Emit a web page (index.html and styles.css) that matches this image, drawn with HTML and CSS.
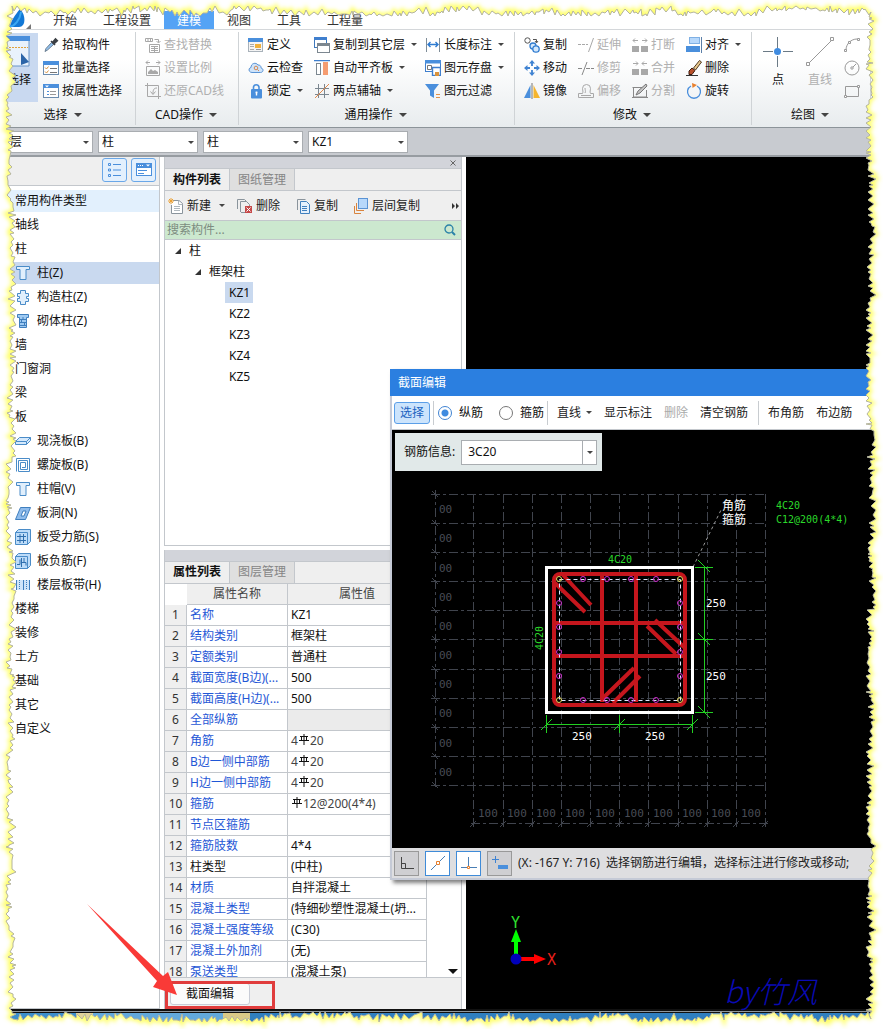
FILE: index.html
```html
<!DOCTYPE html>
<html lang="zh-CN">
<head>
<meta charset="utf-8">
<title>截面编辑</title>
<link rel="stylesheet" href="styles.css">
</head>
<body>
<svg class="defs" aria-hidden="true">
  <symbol id="i-picker" viewBox="0 0 16 16"><path d="M2 14.500l1-3 5.500-6 2 2-6 5.500z" fill="#8fc0ee" stroke="#6b7f92"/><path d="M8 4l4 4M9.500 5.500l3-3.500 1.800 1.800-3.300 3z" stroke="#3b3f44" stroke-width="1.600" fill="#3b3f44"/></symbol>
  <symbol id="i-list" viewBox="0 0 16 16"><rect x=".5" y="1.500" width="15" height="13" fill="#fff" stroke="#6b8cae"/><path d="M0 1h16v4H0z" fill="#4a8fdc"/><path d="M2 7.500l1.500 1.500 2-2.500M2 11.500l1.500 1.500 2-2.500" stroke="#d9923c" fill="none"/><path d="M7 8.500h7M7 12.500h7" stroke="#777"/></symbol>
  <symbol id="i-attr" viewBox="0 0 16 16"><rect x=".5" y="1.500" width="15" height="13" fill="#fff" stroke="#6b8cae"/><path d="M0 1h16v4H0z" fill="#4a8fdc"/><path d="M2 2.500h4L4 4.500z" fill="#fff"/><path d="M4 8.500h2M4 11.500h2" stroke="#4a8fdc"/><path d="M7 8.500h6M7 11.500h6" stroke="#999"/></symbol>
  <symbol id="i-find" viewBox="0 0 16 16"><g fill="none" stroke="#a8a8a8"><path d="M.500 1.500h7v3h-7zM3 1.500v3M5.500 1.500v3M9.500 2.500h4v3"/><path d="M11.500 4l2 2 2-2"/><path d="M4.500 7.500h10v8h-10z"/><path d="M6 9.500h7M6 11.500h7M6 13.500h7M9.500 9v6" /></g></symbol>
  <symbol id="i-scale" viewBox="0 0 16 16"><g fill="none" stroke="#a8a8a8"><path d="M1 2.500h4M11 2.500h4M3 .5l-2 2 2 2M13 .5l2 2-2 2"/><path d="M1.500 6.500h13v9h-13z"/></g><path d="M3 14v-2l3-3 2 2 2-1 3 2v2z" fill="#a8a8a8"/></symbol>
  <symbol id="i-restore" viewBox="0 0 16 16"><g fill="none" stroke="#a8a8a8"><path d="M2.500 0v13.500H16M0 2.500h13.500V16M12 5c-4 0-4 3-4 6M5.500 8.500L8 11.500l2.500-3"/></g></symbol>
  <symbol id="i-define" viewBox="0 0 16 16"><rect x=".5" y="1.500" width="14" height="13" fill="#f4f4f4" stroke="#a9b2ba"/><path d="M0 1h15v4H0z" fill="#4a8fdc"/><path d="M2 7.500h4M2 9.500h4M2 12.500h4" stroke="#aaa"/><path d="M7 7h6v4H7z" fill="#f0b13d"/><path d="M8 12.500h5" stroke="#999"/></symbol>
  <symbol id="i-cloud" viewBox="0 0 16 16"><path d="M4 12.500C.500 12.500 0 8 3 7.500 3 3 8 2 10 5c3 0 3 2 3 3 3 .5 2.500 4.500-.5 4.500z" fill="#cfe4fa" stroke="#5a93d4"/><circle cx="8" cy="8" r="1.800" fill="none" stroke="#d58a55"/><path d="M9.500 9.500L11 11" stroke="#d58a55"/></symbol>
  <symbol id="i-lock" viewBox="0 0 16 16"><path d="M5.500 7V4a2.800 2.800 0 0 1 5.500 0v3" fill="none" stroke="#4a8fdc" stroke-width="1.600"/><rect x="3" y="6" width="11" height="9.500" rx="1" fill="#4a8fdc"/><path d="M8.500 8.500v4M7.500 9.500h2" stroke="#fff" stroke-width="1.400"/></symbol>
  <symbol id="i-copyfloor" viewBox="0 0 16 16"><rect x=".5" y=".5" width="12" height="10" fill="#fff" stroke="#3f79bd"/><path d="M0 0h13v3H0z" fill="#3f7fce"/><rect x="3.500" y="6.500" width="12" height="9" fill="#fff" stroke="#7c8790"/><path d="M3 6h13v3H3z" fill="#7c8790"/></symbol>
  <symbol id="i-level" viewBox="0 0 16 16"><path d="M0 .5h16" stroke="#3f7fce" stroke-width="1.500"/><rect x="2.500" y="3.500" width="4" height="11" fill="#fff" stroke="#7c8790"/><rect x="9" y="2" width="5" height="13" fill="#f59c70"/></symbol>
  <symbol id="i-axis2" viewBox="0 0 16 16"><path d="M4.500 1v14M10.500 1v14M1 5.500h14M1 11.500h14" stroke="#7c8790"/><path d="M1 15L15 1" stroke="#e3894a"/></symbol>
  <symbol id="i-length" viewBox="0 0 16 16"><path d="M1.500 1v14M14.500 1v14" stroke="#7f8d99"/><path d="M3 7.500h10M5.500 5L3 7.500 5.500 10M10.500 5L13 7.500 10.500 10" stroke="#2f7bd0" fill="none" stroke-width="1.400"/></symbol>
  <symbol id="i-save" viewBox="0 0 16 16"><rect x=".5" y=".5" width="15" height="11" fill="#fff" stroke="#3f7fce"/><path d="M0 0h16v3.500H0z" fill="#4a8fdc"/><path d="M2.500 5.500h4v4h-4z" fill="none" stroke="#777"/><path d="M7.500 7.500h8v8h-8z" fill="#fff" stroke="#3f7fce" stroke-width="1.400"/><path d="M10 12h4v4h-4z" fill="#d9923c"/></symbol>
  <symbol id="i-filter" viewBox="0 0 16 16"><path d="M0 1h14L9 7.500V15l-4-2.500V7.500z" fill="#4a8fdc"/><path d="M11 11.500h4M11 14.500h4" stroke="#e0914a"/></symbol>
  <symbol id="i-copy3" viewBox="0 0 16 16"><g fill="#fff" stroke="#555"><circle cx="3.500" cy="3.500" r="2.700"/><path d="M9 2.500h3.500v3M11 4l1.500 2L14 4" fill="none"/></g><g fill="#d4e8fb" stroke="#2f7bd0" stroke-width="1.300"><circle cx="9" cy="9" r="3"/><circle cx="12" cy="12" r="3.200"/></g></symbol>
  <symbol id="i-move" viewBox="0 0 16 16"><path d="M8 0l3 3.500H5zM8 16l3-3.500H5zM0 8l3.500-3v6zM16 8l-3.500-3v6z" fill="#3f83d2"/><path d="M8 3v3M8 10v3M3 8h3M10 8h3" stroke="#3f83d2" stroke-width="1.800"/></symbol>
  <symbol id="i-mirror" viewBox="0 0 16 16"><path d="M6.500 2v13H0z" fill="#4a8fdc"/><path d="M8 0v16" stroke="#777"/><path d="M9.500 2v13H16z" fill="#f5b52e"/></symbol>
  <symbol id="i-extend" viewBox="0 0 16 16"><path d="M0 7.500h10" stroke="#a8a8a8" stroke-dasharray="3 1"/><path d="M15.500 1l-5 14" stroke="#a8a8a8"/></symbol>
  <symbol id="i-trim" viewBox="0 0 16 16"><path d="M0 8.500h5M8 8.500h8" stroke="#888" stroke-dasharray="4 1"/><path d="M9 2L4 15" stroke="#888"/></symbol>
  <symbol id="i-offset" viewBox="0 0 16 16"><path d="M.500 14.500v-4h4c1-2 0-3 0-5a4 4 0 0 1 8 0c0 2-1 3 0 5h3v4z" fill="none" stroke="#a8a8a8"/><path d="M3 12.500h10M7 10c1-2 0-3 0-5" stroke="#a8a8a8" fill="none"/></symbol>
  <symbol id="i-break" viewBox="0 0 16 16"><path d="M0 9h7v6H0zM9 9h7v6H9z" fill="#a8a8a8"/><path d="M1 3.500h5M10 3.500h5M3 1.500l-2 2 2 2M13 1.500l2 2-2 2" fill="none" stroke="#a8a8a8"/></symbol>
  <symbol id="i-merge" viewBox="0 0 16 16"><path d="M0 9h7v6H0zM9 9h7v6H9z" fill="#a8a8a8"/><path d="M1 3.500h5M10 3.500h5M4 1.500l2 2-2 2M12 1.500l-2 2 2 2" fill="none" stroke="#a8a8a8"/></symbol>
  <symbol id="i-split" viewBox="0 0 16 16"><path d="M.500 4.500h10M1.500 4v10h13V7M0 14.500h16" fill="none" stroke="#888"/><path d="M4 12l2-4 8-7 1 2-7 7z" fill="#c4c4c4" stroke="#777"/></symbol>
  <symbol id="i-align" viewBox="0 0 16 16"><path d="M15.500 0v16" stroke="#5b7fa8"/><rect x="3.500" y=".5" width="10" height="6" fill="#b7d8fb" stroke="#7fb0e4"/><rect x="0" y="9" width="14" height="6" fill="#4a8fdc"/></symbol>
  <symbol id="i-brush" viewBox="0 0 16 16"><path d="M7.500 8l6-7.500 2 1.500-6 8z" fill="#e9c98e" stroke="#50381f"/><path d="M3 11l3-3 3 2.500-3 4H3z" fill="#b8502a" stroke="#3d1d10"/><path d="M0 15.500h12" stroke="#333"/></symbol>
  <symbol id="i-rotate" viewBox="0 0 16 16"><path d="M5 3a6.500 6.500 0 1 0 6 0" fill="none" stroke="#4a8fdc" stroke-width="1.300"/><path d="M6 0l5 2-4.500 3z" fill="#e8812e"/></symbol>
  <symbol id="i-new" viewBox="0 0 16 16"><path d="M5 2.500h6l3.500 3v10h-11V7" fill="#fff" stroke="#8a949c"/><path d="M10.500 2.500v4h4M6 8.500h6M6 10.500h6M6 12.500h6" stroke="#b0b8be" fill="none"/><path d="M3 0v6M0 3h6M1 1l4 4M5 1L1 5" stroke="#eda235"/></symbol>
  <symbol id="i-del" viewBox="0 0 16 16"><path d="M.500 11V1.500h7l2 2M3.500 14V3.500h6l3 3v2M4 14.500h4" fill="none" stroke="#8a949c"/><rect x="8" y="8" width="7" height="7" fill="#c64a4a"/><path d="M9.500 9.500l4 4M13.500 9.500l-4 4" stroke="#fff"/></symbol>
  <symbol id="i-copy" viewBox="0 0 16 16"><path d="M2.500 12V1.500h8" fill="none" stroke="#8a949c"/><path d="M5.500 3.500h6l3 3v9h-9z" fill="#e4f0fc" stroke="#3f7fbe"/><path d="M7 8.500h5M7 10.500h5M7 12.500h5" stroke="#3f7fbe"/></symbol>
  <symbol id="i-layer" viewBox="0 0 16 16"><path d="M1.500 8v7.500H8M3.500 5v7.500H11" fill="none" stroke="#d9843e"/><rect x="5.500" y=".5" width="9" height="10" fill="#b7d8fb" stroke="#5a93d4"/></symbol>
  <symbol id="i-col" viewBox="0 0 16 16"><path d="M1.500 1.500h13v3h-3.500v10H5v-10H1.500z" fill="#e1effc" stroke="#4a8cc8"/></symbol>
  <symbol id="i-gcol" viewBox="0 0 16 16"><path d="M5.500 1.500h5v3h3v3h-2v2h2v3h-3v3h-5v-3h-3v-3h2v-2h-2v-3h3z" fill="#e1effc" stroke="#4a8cc8"/></symbol>
  <symbol id="i-bcol" viewBox="0 0 16 16"><path d="M2.500 1.500h11v3h-2v10h-7v-10h-2z" fill="#9fcaf2" stroke="#3f7fbe"/><path d="M5 6.500h6M5 9.500h6M5 12.500h6M8 4v3M6.500 7v3M9.500 10v3" stroke="#3f7fbe"/></symbol>
  <symbol id="i-slab" viewBox="0 0 16 16"><path d="M.500 8.500l4-4h11v3l-4 4H.500zM.500 8.500h11v3M11.500 8.500l4-4" fill="#d5e9fc" stroke="#4a8cc8"/></symbol>
  <symbol id="i-spiral" viewBox="0 0 16 16"><path d="M7 10.500h3.500v-5h-5v7h7v-9h-9v11h11V1.500h-13v13" fill="none" stroke="#4a8cc8"/></symbol>
  <symbol id="i-hole" viewBox="0 0 16 16"><path d="M.500 14.500l5-12h10l-5 12z" fill="#8fbcec" stroke="#3f7fbe"/><path d="M6 11l2-5h3l-2 5z" fill="#fff" stroke="#3f7fbe"/></symbol>
  <symbol id="i-force" viewBox="0 0 16 16"><path d="M.500 3.500l3-3h12v12l-3 3H.500z" fill="#bddcf9" stroke="#4a8cc8"/><path d="M.500 3.500h12v12" fill="none" stroke="#4a8cc8"/><path d="M2 7.500h9M2 11.500h9M5 5v9M8.500 5v9" stroke="#2f6fae" fill="none"/></symbol>
  <symbol id="i-neg" viewBox="0 0 16 16"><path d="M.500 3.500l3-3h12v12l-3 3H.500z" fill="#bddcf9" stroke="#4a8cc8"/><path d="M.500 3.500h12v12" fill="none" stroke="#4a8cc8"/><path d="M2 11.500h3v-5M6.500 5v9M6 9.500h5v3M9 5v4" stroke="#2f6fae" fill="none"/></symbol>
  <symbol id="i-strip" viewBox="0 0 16 16"><path d="M1 3h14v10H1z" fill="#cfe5fa"/><path d="M1.500 3v10M8.500 3v10M14.500 3v10" stroke="#3f7fbe"/><path d="M4.500 3v10M11.500 3v10" stroke="#3f7fbe" stroke-dasharray="1 1"/></symbol>
  <symbol id="i-rebar" viewBox="0 0 10 11"><path d="M5 0v11M1 2.500h8M0 6.500h10M2.500 2.500v4M7.500 2.500v4" fill="none" stroke="#111"/></symbol>
</svg>

<div class="app">
  <nav class="tabs" aria-label="功能区">
    <span class="logo"><svg width="28" height="22" viewBox="0 0 28 22"><path d="M4 20C4 15 9 8 14 2 20 8 20 20 13 20z" fill="#1178d6"/><path d="M3 20c6-1 11-7 12-15" fill="none" stroke="#39a7f2" stroke-width="2"/><path d="M25 17v5h-5z" fill="#777"/></svg></span>
    <a href="#">开始</a><a href="#">工程设置</a><a href="#" class="on">建模</a><a href="#">视图</a><a href="#">工具</a><a href="#">工程量</a>
  </nav>

  <section class="ribbon">
    <div class="group g-select">
      <div class="cols">
        <button class="big active"><svg width="24" height="32" viewBox="0 0 24 32"><path d="M0 1h22v29H0z" fill="#e9f2fc" stroke="#6a96c8"/><path d="M0 0h23v5H0z" fill="#4a8fdc"/><path d="M2 11.500h19" stroke="#e0a13c" stroke-dasharray="2 1"/><path d="M14 17v12l8-3z" fill="#2c65a8"/></svg>选择</button>
        <div class="col">
          <button class="cmd"><svg><use href="#i-picker"/></svg>拾取构件</button>
          <button class="cmd"><svg><use href="#i-list"/></svg>批量选择</button>
          <button class="cmd"><svg><use href="#i-attr"/></svg>按属性选择</button>
        </div>
      </div>
      <button class="caption">选择<i class="arr"></i></button>
    </div>
    <div class="group g-cad">
      <div class="cols"><div class="col">
        <button class="cmd" disabled><svg><use href="#i-find"/></svg>查找替换</button>
        <button class="cmd" disabled><svg><use href="#i-scale"/></svg>设置比例</button>
        <button class="cmd" disabled><svg><use href="#i-restore"/></svg>还原CAD线</button>
      </div></div>
      <button class="caption">CAD操作<i class="arr"></i></button>
    </div>
    <div class="group g-common">
      <div class="cols">
        <div class="col">
          <button class="cmd"><svg><use href="#i-define"/></svg>定义</button>
          <button class="cmd"><svg><use href="#i-cloud"/></svg>云检查</button>
          <button class="cmd"><svg><use href="#i-lock"/></svg>锁定<i class="arr s"></i></button>
        </div>
        <div class="col">
          <button class="cmd"><svg><use href="#i-copyfloor"/></svg>复制到其它层<i class="arr s"></i></button>
          <button class="cmd"><svg><use href="#i-level"/></svg>自动平齐板<i class="arr s"></i></button>
          <button class="cmd"><svg><use href="#i-axis2"/></svg>两点辅轴<i class="arr s"></i></button>
        </div>
        <div class="col">
          <button class="cmd"><svg><use href="#i-length"/></svg>长度标注<i class="arr s"></i></button>
          <button class="cmd"><svg><use href="#i-save"/></svg>图元存盘<i class="arr s"></i></button>
          <button class="cmd"><svg><use href="#i-filter"/></svg>图元过滤</button>
        </div>
      </div>
      <button class="caption">通用操作<i class="arr"></i></button>
    </div>
    <div class="group g-modify">
      <div class="cols">
        <div class="col">
          <button class="cmd"><svg><use href="#i-copy3"/></svg>复制</button>
          <button class="cmd"><svg><use href="#i-move"/></svg>移动</button>
          <button class="cmd"><svg><use href="#i-mirror"/></svg>镜像</button>
        </div>
        <div class="col">
          <button class="cmd" disabled><svg><use href="#i-extend"/></svg>延伸</button>
          <button class="cmd" disabled><svg><use href="#i-trim"/></svg>修剪</button>
          <button class="cmd" disabled><svg><use href="#i-offset"/></svg>偏移</button>
        </div>
        <div class="col">
          <button class="cmd" disabled><svg><use href="#i-break"/></svg>打断</button>
          <button class="cmd" disabled><svg><use href="#i-merge"/></svg>合并</button>
          <button class="cmd" disabled><svg><use href="#i-split"/></svg>分割</button>
        </div>
        <div class="col">
          <button class="cmd"><svg><use href="#i-align"/></svg>对齐<i class="arr s"></i></button>
          <button class="cmd"><svg><use href="#i-brush"/></svg>删除</button>
          <button class="cmd"><svg><use href="#i-rotate"/></svg>旋转</button>
        </div>
      </div>
      <button class="caption">修改<i class="arr"></i></button>
    </div>
    <div class="group g-draw">
      <div class="cols">
        <button class="big"><svg width="30" height="32" viewBox="0 0 30 32"><path d="M14.500 1v11M14.500 20v11M0 15.500h10M20 15.500h10" stroke="#6b7a86"/><circle cx="14.500" cy="15.500" r="3.500" fill="#3f8be0"/></svg>点</button>
        <button class="big" disabled><svg width="30" height="32" viewBox="0 0 30 32"><path d="M4 27L26 5" stroke="#999"/><path d="M1.500 26.500h3v3h-3zM25.500 1.500h3v3h-3z" fill="#fff" stroke="#999"/></svg>直线</button>
        <div class="col shapes">
          <button class="cmd" aria-label="弧线" disabled><svg viewBox="0 0 16 16"><path d="M2 13C2 7 7 2 13 2" fill="none" stroke="#999"/><path d="M.500 12.500h2v2h-2zM4.500 4.500h2v2h-2zM13.500 1.500h2v2h-2z" fill="#fff" stroke="#999"/></svg></button>
          <button class="cmd" aria-label="圆" disabled><svg viewBox="0 0 16 16"><circle cx="8" cy="8" r="7" fill="none" stroke="#999"/><path d="M8 8l4-4" stroke="#999"/><circle cx="8" cy="8" r="1.200" fill="#fff" stroke="#999"/></svg></button>
          <button class="cmd" aria-label="矩形" disabled><svg viewBox="0 0 16 16"><path d="M1.500 3.500h13v10h-13z" fill="none" stroke="#999"/><path d="M.500 12.500h2v2h-2zM13.500 2.500h2v2h-2z" fill="#fff" stroke="#999"/></svg></button>
        </div>
      </div>
      <button class="caption">绘图<i class="arr"></i></button>
    </div>
  </section>

  <div class="selectors">
    <span class="combo first"><select aria-label="楼层"><option>层</option></select></span>
    <span class="combo"><select aria-label="构件大类"><option>柱</option></select></span>
    <span class="combo"><select aria-label="构件类型"><option>柱</option></select></span>
    <span class="combo"><select aria-label="构件"><option>KZ1</option></select></span>
  </div>

  <main class="work">
    <aside class="types">
      <header>
        <button aria-label="列表视图"><svg width="16" height="16" viewBox="0 0 16 16"><path d="M1.500 1.500h2v2h-2zM1.500 7h2v2h-2zM1.500 12.500h2v2h-2z" fill="none" stroke="#4a8fdc"/><path d="M6 2.500h8M6 8h8M6 13.500h8" stroke="#4a8fdc"/></svg></button>
        <button aria-label="面板视图"><svg width="16" height="16" viewBox="0 0 16 16"><rect x=".5" y="1.500" width="15" height="12" fill="#fff" stroke="#4a8fdc"/><path d="M0 1h16v5H0z" fill="#4a8fdc"/><path d="M2 3.500h6" stroke="#fff" stroke-dasharray="1 1"/><path d="M10 2.500h4l-2 2z" fill="#fff"/><path d="M2 8.500h9M2 11.500h6" stroke="#4a8fdc"/></svg></button>
      </header>
      <ul>
        <li class="head">常用构件类型</li>
        <li>轴线</li>
        <li>柱</li>
        <li class="sub sel"><svg><use href="#i-col"/></svg>柱(Z)</li>
        <li class="sub"><svg><use href="#i-gcol"/></svg>构造柱(Z)</li>
        <li class="sub"><svg><use href="#i-bcol"/></svg>砌体柱(Z)</li>
        <li>墙</li>
        <li>门窗洞</li>
        <li>梁</li>
        <li>板</li>
        <li class="sub"><svg><use href="#i-slab"/></svg>现浇板(B)</li>
        <li class="sub"><svg><use href="#i-spiral"/></svg>螺旋板(B)</li>
        <li class="sub"><svg><use href="#i-col"/></svg>柱帽(V)</li>
        <li class="sub"><svg><use href="#i-hole"/></svg>板洞(N)</li>
        <li class="sub"><svg><use href="#i-force"/></svg>板受力筋(S)</li>
        <li class="sub"><svg><use href="#i-neg"/></svg>板负筋(F)</li>
        <li class="sub"><svg><use href="#i-strip"/></svg>楼层板带(H)</li>
        <li>楼梯</li>
        <li>装修</li>
        <li>土方</li>
        <li>基础</li>
        <li>其它</li>
        <li>自定义</li>
      </ul>
    </aside>

    <div class="middle">
      <section class="pane components">
        <div class="grip"><button aria-label="关闭"><svg width="6" height="6" viewBox="0 0 6 6"><path d="M.500.500l5 5M5.500.500l-5 5" stroke="#666"/></svg></button></div>
        <div class="ptabs"><button class="on">构件列表</button><button>图纸管理</button></div>
        <div class="tools">
          <button class="cmd t-new"><svg><use href="#i-new"/></svg>新建<i class="arr s"></i></button>
          <button class="cmd"><svg><use href="#i-del"/></svg>删除</button>
          <button class="cmd"><svg><use href="#i-copy"/></svg>复制</button>
          <button class="cmd"><svg><use href="#i-layer"/></svg>层间复制</button>
          <button class="more" aria-label="更多"><svg width="8" height="6" viewBox="0 0 8 6"><path d="M0 0l3 3-3 3zM4 0l3 3-3 3z" fill="#333"/></svg></button>
        </div>
        <div class="search"><input type="text" aria-label="搜索构件" placeholder="搜索构件..."><svg width="12" height="12" viewBox="0 0 12 12"><circle cx="5" cy="5" r="4" fill="none" stroke="#2a82a8" stroke-width="1.300"/><path d="M8 8l3 3" stroke="#2a82a8" stroke-width="2"/></svg></div>
        <ul class="tree">
          <li class="l1"><i class="tri"></i>柱</li>
          <li class="l2"><i class="tri"></i>框架柱</li>
          <li class="l3"><span class="picked">KZ1</span></li>
          <li class="l3"><span>KZ2</span></li>
          <li class="l3"><span>KZ3</span></li>
          <li class="l3"><span>KZ4</span></li>
          <li class="l3"><span>KZ5</span></li>
        </ul>
      </section>

      <section class="pane props">
        <div class="grip"></div>
        <div class="ptabs"><button class="on">属性列表</button><button>图层管理</button></div>
        <div class="tablebox">
          <table>
            <thead><tr><th class="corner"></th><th>属性名称</th><th>属性值</th></tr></thead>
            <tbody>
              <tr><td>1</td><td>名称</td><td>KZ1</td></tr>
              <tr><td>2</td><td>结构类别</td><td>框架柱</td></tr>
              <tr><td>3</td><td>定额类别</td><td>普通柱</td></tr>
              <tr><td>4</td><td>截面宽度(B边)(...</td><td>500</td></tr>
              <tr><td>5</td><td>截面高度(H边)(...</td><td>500</td></tr>
              <tr><td>6</td><td>全部纵筋</td><td class="na"></td></tr>
              <tr><td>7</td><td>角筋</td><td class="bar">4<svg><use href="#i-rebar"/></svg>20</td></tr>
              <tr><td>8</td><td>B边一侧中部筋</td><td class="bar">4<svg><use href="#i-rebar"/></svg>20</td></tr>
              <tr><td>9</td><td>H边一侧中部筋</td><td class="bar">4<svg><use href="#i-rebar"/></svg>20</td></tr>
              <tr><td>10</td><td>箍筋</td><td class="bar"><svg><use href="#i-rebar"/></svg>12@200(4*4)</td></tr>
              <tr><td>11</td><td>节点区箍筋</td><td></td></tr>
              <tr><td>12</td><td>箍筋肢数</td><td>4*4</td></tr>
              <tr><td>13</td><td class="plain">柱类型</td><td>(中柱)</td></tr>
              <tr><td>14</td><td>材质</td><td>自拌混凝土</td></tr>
              <tr><td>15</td><td>混凝土类型</td><td>(特细砂塑性混凝土(坍...</td></tr>
              <tr><td>16</td><td>混凝土强度等级</td><td>(C30)</td></tr>
              <tr><td>17</td><td>混凝土外加剂</td><td>(无)</td></tr>
              <tr><td>18</td><td>泵送类型</td><td>(混凝土泵)</td></tr>
            </tbody>
          </table>
          <span class="scroll"><i class="arr dark"></i></span>
        </div>
        <footer><button>截面编辑</button></footer>
      </section>
    </div>

    <div class="view3d">
      <svg class="axes" width="60" height="60" viewBox="0 0 60 60"><path d="M13 46V25h4v21z" fill="#0f0"/><path d="M10 27l5-13 5 13z" fill="#0f0"/><path d="M20 42h14v4H20z" fill="#f00"/><path d="M33 39l12 5-12 5z" fill="#f00"/><circle cx="15" cy="44" r="5.500" fill="#00b"/><text x="10" y="13" fill="#2fe02f">Y</text><text x="46" y="50" fill="#e8201c">X</text></svg>
      <span class="sign">by竹风</span>
    </div>
  </main>
  <div class="taskbar"></div>

  <section class="dialog" role="dialog" aria-label="截面编辑">
    <h2>截面编辑</h2>
    <div class="dtools">
      <button class="db on">选择</button><i class="sep"></i>
      <label><input type="radio" name="bar" checked>纵筋</label>
      <label><input type="radio" name="bar">箍筋</label><i class="sep"></i>
      <button class="db">直线<i class="arr s"></i></button>
      <button class="db">显示标注</button>
      <button class="db" disabled>删除</button>
      <button class="db">清空钢筋</button><i class="sep"></i>
      <button class="db">布角筋</button>
      <button class="db">布边筋</button>
    </div>
    <div class="section-view">
      <svg class="drawing" viewBox="392 430 484 418" preserveAspectRatio="xMinYMin meet">
        <g stroke="#40444d" stroke-dasharray="9 3 3 3" fill="none">
          <path d="M473.500 494v335M503.500 494v335M532.500 494v335M561.500 494v335M590.500 494v335M619.500 494v335M648.500 494v335M678.500 494v335M707.500 494v335M736.500 494v335M765.500 494v335M435.500 490v300"/>
          <path d="M431 494.500h335M431 523.500h335M431 552.500h335M431 581.500h335M431 610.500h335M431 639.500h335M431 669.500h335M431 698.500h335M431 727.500h335M431 756.500h335M431 785.500h335M471 823.500h297"/>
        </g>
        <path stroke="#40444d" d="M432 491l6 6M432 520l6 6M432 549l6 6M432 578l6 6M432 607l6 6M432 636l6 6M432 666l6 6M432 695l6 6M432 724l6 6M432 753l6 6M432 782l6 6M470 827l6-6M500 827l6-6M529 827l6-6M558 827l6-6M587 827l6-6M616 827l6-6M645 827l6-6M675 827l6-6M704 827l6-6M733 827l6-6M762 827l6-6"/>
        <g class="gridtext">
          <text x="439" y="513">00</text><text x="439" y="542">00</text><text x="439" y="572">00</text><text x="439" y="601">00</text><text x="439" y="630">00</text><text x="439" y="659">00</text><text x="439" y="688">00</text><text x="439" y="717">00</text><text x="439" y="747">00</text><text x="439" y="776">00</text>
          <text x="478" y="817">100</text><text x="507" y="817">100</text><text x="536" y="817">100</text><text x="565" y="817">100</text><text x="595" y="817">100</text><text x="624" y="817">100</text><text x="653" y="817">100</text><text x="682" y="817">100</text><text x="711" y="817">100</text><text x="741" y="817">100</text>
        </g>
        <path d="M693 567l28-57" stroke="#999" stroke-dasharray="3 3"/>
        <rect x="546.500" y="567.500" width="146" height="145" fill="none" stroke="#fff" stroke-width="3"/>
        <g fill="none" stroke="#c5161d" stroke-width="4">
          <rect x="554" y="574" width="131" height="131" rx="6"/>
          <path d="M602 574v128M636 574v128M554 623h131M554 656h131"/>
          <path d="M555 583l30 29M563 575l28 30M647 626l29 28M655 620l30 28M634 668l-31 30M640 676l-27 27"/>
        </g>
        <rect x="559.500" y="579.500" width="121" height="121" fill="none" stroke="#dfe6ff" stroke-dasharray="4 3"/>
        <g fill="none" stroke="#d030d0">
          <circle cx="583" cy="579" r="2.500"/><circle cx="607" cy="579" r="2.500"/><circle cx="631" cy="579" r="2.500"/><circle cx="656" cy="579" r="2.500"/>
          <circle cx="583" cy="700" r="2.500"/><circle cx="607" cy="700" r="2.500"/><circle cx="631" cy="700" r="2.500"/><circle cx="656" cy="700" r="2.500"/>
          <circle cx="559" cy="603" r="2.500"/><circle cx="559" cy="627" r="2.500"/><circle cx="559" cy="652" r="2.500"/><circle cx="559" cy="676" r="2.500"/>
          <circle cx="680" cy="603" r="2.500"/><circle cx="680" cy="627" r="2.500"/><circle cx="680" cy="652" r="2.500"/><circle cx="680" cy="676" r="2.500"/>
        </g>
        <g fill="none" stroke="#e8dc60"><circle cx="559" cy="579" r="2.500"/><circle cx="680" cy="579" r="2.500"/><circle cx="559" cy="700" r="2.500"/><circle cx="680" cy="700" r="2.500"/></g>
        <path stroke="#22d022" fill="none" d="M704.500 567v146M695 567.500h18M695 639.500h18M695 712.500h18M698 560l12 12M698 633l12 12M698 706l12 12M546 724.500h147M546.500 715v18M619.500 715v18M692.500 715v18M541 730l11-11M614 730l11-11M687 730l11-11"/>
        <g class="green"><text x="608" y="563">4C20</text><text x="776" y="509">4C20</text><text x="776" y="523">C12@200(4*4)</text><text transform="translate(543 650) rotate(-90)">4C20</text></g>
        <g class="white"><text x="706" y="607">250</text><text x="706" y="680">250</text><text x="572" y="740">250</text><text x="645" y="740">250</text></g>
        <g class="cn"><text x="722" y="510">角筋</text><text x="722" y="524">箍筋</text></g>
      </svg>
      <div class="info"><label for="rebar">钢筋信息:</label><span class="combo"><select id="rebar"><option>3C20</option></select></span></div>
    </div>
    <div class="dstatus">
      <button class="off" aria-label="正交"><svg width="16" height="16" viewBox="0 0 16 16"><path d="M2.500 2v11.500H15M2.500 8.500h4v5" fill="none" stroke="#444"/></svg></button>
      <button aria-label="中点"><svg width="16" height="16" viewBox="0 0 16 16"><path d="M1 15L15 1" stroke="#4a7fb5"/><path d="M6.500 6.500h3v3h-3z" fill="#fff" stroke="#e8812e"/></svg></button>
      <button aria-label="垂足"><svg width="16" height="16" viewBox="0 0 16 16"><path d="M0 12.500h16M7.500 2v10" stroke="#4a7fb5"/><path d="M6.500 11.500h2v2h-2z" fill="#fff" stroke="#e8812e"/></svg></button>
      <button class="off" aria-label="动态输入"><svg width="18" height="16" viewBox="0 0 18 16"><path d="M4.500 1v7M1 4.500h7" stroke="#3f83d2"/><path d="M7 10h10v4H7z" fill="#4a8fdc"/></svg></button>
      <span>(X: -167 Y: 716)&nbsp; 选择钢筋进行编辑，选择标注进行修改或移动;</span>
    </div>
  </section>

  <div class="redbox"></div>
  <svg class="redarrow" width="92" height="94" viewBox="0 0 92 94"><path d="M0 0L76 72 81 68 90 91 66 83 70 77z" fill="#f93a37"/></svg>
</div>
<svg class="tear" aria-hidden="true"></svg>
<script src="tear.js"></script>
</body>
</html>
```

FILE: styles.css
```css
* { box-sizing: border-box; }
body { margin: 0; background: #fff; color: #111; font: 12px/16px "Noto Sans", "Noto Sans CJK SC", sans-serif; }
ul { list-style: none; margin: 0; padding: 0; }
button { font: inherit; color: inherit; border: 0; padding: 0; background: none; white-space: nowrap; }
button:disabled { color: #b0b0b0; }
svg { flex: none; display: block; }
.defs { position: absolute; width: 0; height: 0; }
.app { position: relative; height: 100vh; min-height: 960px; padding: 6px 7px 7px 6px; display: flex; flex-direction: column; overflow: hidden; }
.arr { flex: none; border: 4px solid transparent; border-top-color: #444; border-bottom: 0; margin-left: 6px; }
.arr.s { border-width: 3px; border-bottom: 0; margin-left: 5px; }
.cmd .arr.s { margin-left: 3px; }
.arr.dark { border-width: 5px; border-bottom: 0; border-top-color: #111; margin: 0; }

.tabs { flex: none; height: 24px; display: flex; align-items: flex-end; border-bottom: 1px solid #d4d7da; }
.tabs .logo { width: 34px; }
.tabs a { padding: 2px 13px 0; color: #333; text-decoration: none; }
.tabs a.on { background: #55a3f5; color: #fff; }

.ribbon { flex: none; height: 98px; display: flex; background: linear-gradient(#fff 30%, #e8ecee); border-bottom: 1px solid #8c9499; }
.group { flex: none; margin: 2px 0; padding-top: 1px; display: flex; flex-direction: column; justify-content: space-between; border-right: 1px solid #cfd3d6; }
.cols { display: flex; padding-left: 9px; }
.g-select { width: 130px; }
.g-select .cols { padding-left: 0; gap: 5px; }
.g-cad { width: 103px; }
.g-common { width: 276px; }
.g-modify { width: 237px; }
.g-draw { width: 119px; }
.g-common .cols { display: grid; grid-template-columns: 66px 111px auto; }
.g-modify .cols { display: grid; grid-template-columns: 54px 54px 54px auto; }
.cmd { display: flex; align-items: center; height: 23px; gap: 3px; }
.cmd svg { width: 16px; height: 16px; }
.big { display: flex; flex-direction: column; align-items: center; gap: 4px; width: 42px; padding-top: 3px; }
.g-select .big { width: 32px; align-items: flex-end; padding-right: 7px; }
.big.active { background: #c9d9f0; }
.g-draw .cols { padding-left: 5px; }
.g-draw .shapes { padding-left: 3px; }
.caption { display: flex; align-items: center; justify-content: center; height: 20px; padding-right: 2px; }
.g-select .caption { padding-right: 16px; }

.selectors { flex: none; display: flex; gap: 5px; padding: 3px 0 2px; background: #c8cbd0; border-bottom: 2px solid #979ca1; }
.combo { position: relative; display: block; width: 100px; height: 22px; }
.combo.first { width: 87px; }
.combo select { appearance: none; width: 100%; height: 100%; padding: 0 3px; border: 1px solid #a9adb1; border-radius: 0; background: #fff; font: inherit; color: #111; }
.combo::after { content: ""; position: absolute; right: 4px; top: 10px; border: 3px solid transparent; border-top-color: #444; border-bottom: 0; }

.work { flex: 1; min-height: 0; display: flex; }
.types { flex: none; width: 154px; border-right: 1px solid #c3c7cc; overflow: hidden; border-bottom: 1px solid #c3c7cc; }
.types header { height: 29px; padding: 1px 3px 3px; display: flex; justify-content: flex-end; gap: 4px; background: #efefef; border-bottom: 1px solid #c3c7cc; }
.types header button { width: 25px; height: 24px; display: grid; place-items: center; border: 1px solid #6aa7e8; border-radius: 3px; background: #e3f0fd; }
.types ul { padding-top: 4px; }
.types li { height: 22px; margin-bottom: 2px; padding-left: 9px; display: flex; align-items: center; gap: 6px; white-space: nowrap; }
.types li svg { width: 16px; height: 16px; }
.types li.head { background: #e2f0fd; }
.types li.sel { background: #c9d9ef; }

.middle { flex: none; width: 302px; margin-left: 4px; padding-right: 4px; display: flex; flex-direction: column; gap: 4px; }
.pane { min-height: 0; display: flex; flex-direction: column; border: 1px solid #c3c7cc; border-top: 0; overflow: hidden; }
.components { flex: 388 1 0; }
.props { flex: 460 1 0; border-bottom: 0; }
.grip { flex: none; height: 12px; display: flex; justify-content: flex-end; align-items: center; padding-right: 5px; background: #d2d4da; border-bottom: 1px solid #c3c7cc; }
.ptabs { flex: none; height: 22px; display: flex; background: #efefef; border-bottom: 1px solid #c3c7cc; }
.ptabs button { width: 65px; color: #858585; background: #dfdfdf; border-right: 1px solid #c3c7cc; }
.ptabs button.on { color: #111; background: #efefef; font-weight: bold; }
.tools { flex: none; height: 29px; display: flex; align-items: center; gap: 15px; padding: 0 1px 0 3px; background: #efefef; color: #222; }
.tools .t-new { margin-right: -3px; }
.tools .t-new .arr { margin-left: 5px; }
.tools .more { margin-left: auto; }
.search { flex: none; height: 20px; display: flex; align-items: center; padding: 0 5px 0 2px; background: #cce8cf; border: solid #c3c7cc; border-width: 1px 0; }
.search input { flex: 1; min-width: 0; border: 0; padding: 0; background: none; font: inherit; }
.search input::placeholder { color: #7d8c80; }
.tree li { height: 21px; display: flex; align-items: center; gap: 8px; }
.tree .l1 { padding-left: 10px; }
.tree .l2 { padding-left: 30px; }
.tree .l3 { padding-left: 60px; }
.tree span { line-height: 21px; padding: 0 3px 0 4px; }
.picked { background: #c9d9ef; }
.tri { border: 3px solid #333; border-left-color: transparent; border-top-color: transparent; }

.tablebox { flex: 1; min-height: 0; display: flex; overflow: hidden; border-bottom: 1px solid #c3c7cc; }
table { flex: none; width: 262px; table-layout: fixed; border-collapse: separate; border-spacing: 0; align-self: flex-start; }
th, td { height: 21px; padding: 0 0 0 3px; border: solid #c3c7cc; border-width: 0 1px 1px 0; font-weight: normal; text-align: left; white-space: nowrap; overflow: hidden; line-height: 16px; }
th { height: 21px; padding: 0; text-align: center; background: #efefef; color: #444; }
th:first-child { width: 22px; background: #fff; border: 0; }
th:nth-child(2) { width: 101px; }
td:first-child { padding: 0; text-align: center; background: #efefef; color: #333; }
td:nth-child(2) { color: #1f57d6; }
td.plain { color: #111; }
td.na { background: #ebebeb; }
td.bar { color: #444; }
td.bar svg { display: inline-block; width: 10px; height: 11px; margin: 0 1px; vertical-align: 0; }
.scroll { flex: 1; display: flex; align-items: flex-end; justify-content: flex-end; padding: 0 3px 3px 0; }
.props footer { flex: none; height: 31px; padding: 5px 5px 4px; background: #efefef; }
.props footer button { width: 80px; height: 22px; background: #fbfbfb; border: 1px solid #c8ccd6; border-radius: 3px; }

.view3d { position: relative; flex: 1; min-width: 0; background: #000; }
.axes { position: absolute; left: 35px; bottom: 34px; font: 15px "DejaVu Sans Mono", monospace; }
.sign { position: absolute; right: 59px; bottom: 2px; color: #0a0ab4; font: italic 300 30px/34px "Noto Sans CJK SC", sans-serif; }
.taskbar { flex: none; height: 13px; border-top: 2px solid #111; background: linear-gradient(#8f979c 1px, #111 1px, #111 2px, transparent 2px), linear-gradient(90deg, #3c8fcb 0 8%, #e0d29a 8% 10%, #62a9dc 10% 25%, #d9c987 25% 28%, #2f7fc0 28%); }

.dialog { position: absolute; left: 390px; right: 7px; top: 369px; border-left: 2px solid #c5cad6; border-bottom: 2px solid #c5cad6; background: #fff; box-shadow: 3px 3px 4px rgba(0,0,0,.5); }
.dialog h2 { margin: 0 0 0 -2px; height: 27px; padding: 0 8px; font-size: 12px; font-weight: normal; line-height: 27px; color: #fff; background: #2b7fe0; }
.dtools { height: 34px; display: flex; align-items: center; padding-left: 2px; overflow: hidden; border-bottom: 1px solid #c3c7cc; }
.db { flex: none; display: flex; align-items: center; height: 22px; padding: 0 5px; margin-right: 2px; border-radius: 3px; color: #222; }
.db:disabled { color: #aaa; }
.db.on { background: #cce4fc; border: 1px solid #5b9fe8; color: #1a62c0; margin-right: 0; }
.sep { flex: none; width: 1px; height: 24px; margin: 0 4px 0 3px; background: #c8ccd0; }
.dtools label { flex: none; display: flex; align-items: center; gap: 7px; margin-right: 16px; }
.dtools label + .sep { margin-left: -13px; }
.dtools input { appearance: none; width: 14px; height: 14px; margin: 0; border: 1px solid #777; border-radius: 50%; background: #fff; }
.dtools input:checked { border-color: #3f83d2; background: radial-gradient(#3f8be0 0 3px, #fff 4px); }
.section-view { position: relative; background: #000; }
.drawing { width: 100%; }
.drawing text { font-family: "DejaVu Sans Mono", monospace; font-size: 10px; }
.drawing .gridtext text { font-size: 11px; fill: #484c55; }
.green { fill: #2bd92b; }
.white { fill: #fff; }
.drawing .white text { font-size: 11px; }
.drawing .cn text { font-family: "Noto Sans CJK SC", sans-serif; font-size: 12px; fill: #fff; }
.info { position: absolute; left: 3px; top: 3px; display: flex; align-items: center; gap: 6px; height: 38px; padding: 0 5px 0 9px; background: #e1e9e9; }
.info .combo { width: 136px; height: 25px; }
.info .combo select { padding-left: 6px; }
.info .combo::after { top: 11px; }
.info .combo::before { content: ""; position: absolute; right: 14px; top: 1px; bottom: 1px; border-left: 1px solid #a9adb1; }
.dstatus { display: flex; align-items: center; height: 30px; padding-left: 2px; gap: 6px; background: #dedee0; color: #222; white-space: nowrap; overflow: hidden; }
.dstatus button { flex: none; width: 25px; height: 25px; display: grid; place-items: center; background: #fff; border: 1px solid #3f8bd8; }
.dstatus button.off { background: #cfcfd2; border-color: #999; }

.redbox { position: absolute; left: 165px; bottom: 20px; width: 110px; height: 28px; border: 3px solid #e03c3c; }
.redarrow { position: absolute; left: 87px; bottom: 31px; }
.tear { position: absolute; left: 0; top: 0; width: 100%; height: 100%; min-height: 960px; pointer-events: none; }
```

FILE: tear.js
```js
// Torn-paper border: jagged outline with a yellow glow on the outer side.
const tear = document.querySelector('.tear');
function drawTear() {
  const w = tear.clientWidth, h = tear.clientHeight;
  let seed = 7;
  const rnd = () => (seed = (seed * 16807) % 2147483647) / 2147483647;
  const pts = [];
  const edge = (len, place) => {
    let d = 12, base = 5, side = 1;
    while (d < len - 12) {
      base = Math.max(2, Math.min(8, base + (rnd() - 0.5) * 4));
      side = -side;
      const depth = Math.max(0, Math.min(10, base + side * rnd() * 4));
      pts.push(place(d, depth));
      d += 1 + rnd() * 4;
    }
  };
  edge(w, (d, k) => [d, 6 + k]);
  edge(h, (d, k) => [w - 7 - k, d]);
  edge(w, (d, k) => [w - d, h - 7 - k]);
  edge(h, (d, k) => [6 + k, h - d]);
  const line = 'M' + pts.map(p => p.map(Math.round).join(' ')).join('L') + 'Z';
  const frame = `M0 0H${w}V${h}H0Z${line}`;
  tear.innerHTML = `<defs><clipPath id="outer"><path d="${frame}" clip-rule="evenodd"/></clipPath>
    <filter id="glow"><feGaussianBlur stdDeviation="2"/></filter></defs>
    <path d="${frame}" fill="#fff" fill-rule="evenodd"/>
    <g clip-path="url(#outer)"><path d="${line}" fill="none" stroke="#ffff5a" stroke-width="4" filter="url(#glow)"/></g>
    <path d="${line}" fill="none" stroke="#b4b4a0" stroke-width="1"/>`;
}
drawTear();
addEventListener('resize', drawTear);
```
